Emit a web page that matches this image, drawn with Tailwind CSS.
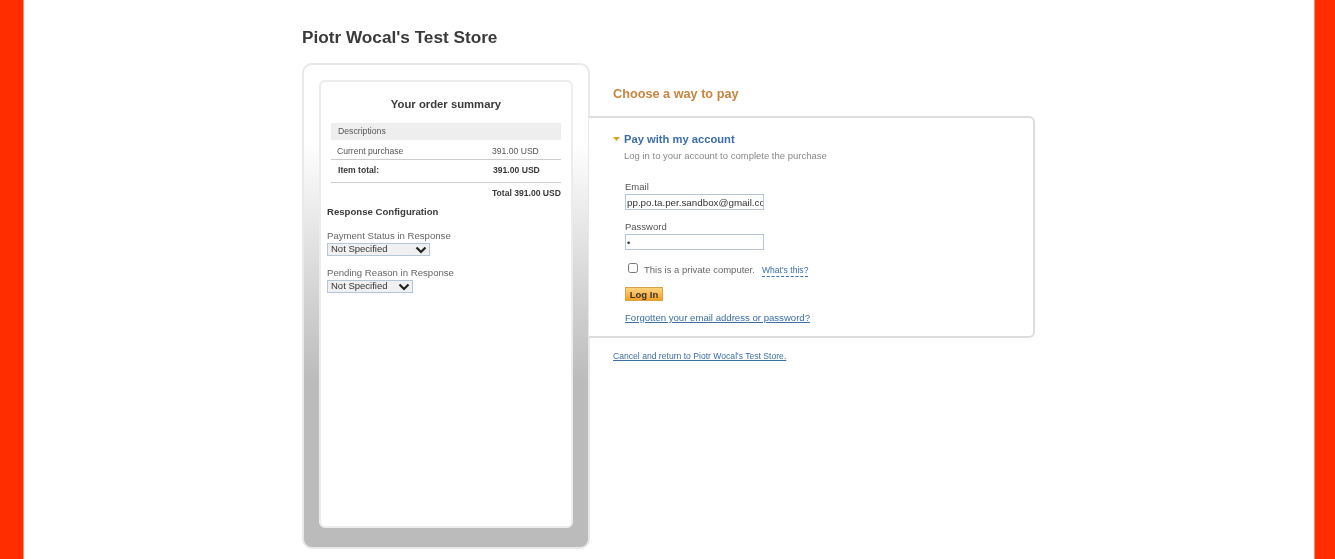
<!DOCTYPE html>
<html lang="en">
<head>
  <meta charset="UTF-8">
  <title>Piotr Wocal's Test Store</title>
  <script src="https://cdn.jsdelivr.net/npm/@tailwindcss/browser@4"></script>
</head>
<body class="bg-white font-['Liberation_Sans',Arial,sans-serif] text-[#333] overflow-hidden">
  <div class="flex h-[559px] justify-between blur-[0.4px]">
    <div class="w-[24px] bg-[#ff2d00] border-r border-r-[#ff8a70]"></div>
    <div class="flex-1 pl-[278px] pt-[27px]">
      <h1 class="text-[17.2px] leading-[20px] font-bold text-[#3a3a3a]">Piotr Wocal's Test Store</h1>
      <div class="flex mt-[16px] items-start">
        <!-- left order panel -->
        <div class="w-[288px] h-[486px] rounded-[10px] border-2 border-[#e8e8e8] bg-gradient-to-b from-white from-[16%] to-[#bbb] to-[66%] pt-[15px] pl-[15px]">
          <div class="w-[254px] h-[448px] rounded-[6px] border-2 border-[#ececec] bg-white pt-[15px] px-[10px]">
            <h2 class="text-[11.3px] leading-[14px] font-bold text-center text-[#3a3a3a]">Your order summary</h2>
            <div class="mt-[12px] h-[17px] bg-[#eee] pl-[7px] text-[8.7px] leading-[16px] text-[#555]">Descriptions</div>
            <div class="flex h-[20px] border-b border-[#ccc] text-[8.6px] leading-[22px] text-[#555] pl-[6px]">
              <span class="w-[155px]">Current purchase</span><span>391.00 USD</span>
            </div>
            <div class="flex h-[23px] border-b border-[#ccc] text-[8.6px] leading-[20px] font-bold text-[#3a3a3a] pl-[7px]">
              <span class="w-[155px]">Item total:</span><span>391.00 USD</span>
            </div>
            <div class="text-right text-[8.6px] leading-[21px] font-bold text-[#3a3a3a]">Total 391.00 USD</div>
            <div class="-ml-[4px]">
              <h3 class="mt-[1px] text-[9.6px] leading-[14px] font-bold text-[#3a3a3a]">Response Configuration</h3>
              <p class="mt-[10px] text-[9.6px] leading-[14px] text-[#666]">Payment Status in Response</p>
              <div class="flex items-center justify-between w-[103px] h-[13px] border border-[#b4c6d8] bg-[#f0f0f0] pl-[3px] pr-[2px] text-[9.5px] text-[#333]">
                <span>Not Specified</span>
                <svg width="12" height="8" viewBox="0 0 12 8" fill="none" stroke="#222" stroke-width="2.2"><path d="M1.5 1.5 6 6l4.5-4.5"/></svg>
              </div>
              <p class="mt-[10px] text-[9.6px] leading-[14px] text-[#666]">Pending Reason in Response</p>
              <div class="flex items-center justify-between w-[86px] h-[13px] border border-[#b4c6d8] bg-[#f0f0f0] pl-[3px] pr-[2px] text-[9.5px] text-[#333]">
                <span>Not Specified</span>
                <svg width="12" height="8" viewBox="0 0 12 8" fill="none" stroke="#222" stroke-width="2.2"><path d="M1.5 1.5 6 6l4.5-4.5"/></svg>
              </div>
            </div>
          </div>
        </div>
        <!-- right payment column -->
        <div class="-ml-[1px] w-[446px]">
          <h2 class="mt-[23px] pl-[24px] text-[12.7px] leading-[16px] font-bold text-[#c9843f]">Choose a way to pay</h2>
          <div class="mt-[14px] h-[222px] rounded-r-[6px] border-2 border-l-0 border-[#ddd] bg-white pt-[14px]">
            <div class="flex items-center pl-[24px]">
              <svg width="7" height="4" viewBox="0 0 7 4" class="mr-[4px]"><path d="M0 0h7L3.5 4z" fill="#d9a520"/></svg>
              <span class="text-[11.2px] leading-[14px] font-bold text-[#3b6ea5]">Pay with my account</span>
            </div>
            <p class="pl-[35px] mt-[3px] text-[9.5px] leading-[14px] text-[#888]">Log in to your account to complete the purchase</p>
            <label class="block pl-[36px] mt-[18px] text-[9.5px] leading-[12px] text-[#555]">Email</label>
            <input type="text" value="pp.po.ta.per.sandbox@gmail.com" class="block ml-[36px] mt-[1px] w-[139px] h-[16px] border border-[#b4c6d8] pl-[1px] text-[9.8px] text-[#333] outline-none">
            <label class="block pl-[36px] mt-[11px] text-[9.5px] leading-[12px] text-[#555]">Password</label>
            <input type="password" value="x" class="block ml-[36px] mt-[1px] w-[139px] h-[16px] border border-[#b4c6d8] pl-[1px] text-[9.5px] text-[#333] outline-none">
            <div class="flex items-center pl-[39px] mt-[13px] h-[14px]">
              <input type="checkbox" class="block w-[10px] h-[10px] -mt-[5px]">
              <span class="ml-[6px] text-[9.5px] leading-[14px] text-[#666]">This is a private computer.</span>
              <a class="ml-[7px] text-[8.6px] leading-[12px] text-[#3b6ea5] border-b border-dashed border-[#3b6ea5]">What's this?</a>
            </div>
            <div class="ml-[36px] mt-[10px] w-[38px] h-[14px] bg-gradient-to-b from-[#ffd27a] to-[#f7a11c] border border-[#d9a24a] text-center text-[9.5px] leading-[13px] font-bold text-[#333]">Log In</div>
            <a class="block ml-[36px] mt-[11px] text-[9.6px] leading-[12px] text-[#3b6ea5] underline">Forgotten your email address or password?</a>
          </div>
          <a class="block pl-[24px] mt-[12px] text-[8.6px] leading-[12px] text-[#3b6ea5] underline">Cancel and return to Piotr Wocal's Test Store.</a>
        </div>
      </div>
    </div>
    <div class="w-[21px] bg-[#ff2d00] border-l border-l-[#ff8a70]"></div>
  </div>
</body>
</html>
